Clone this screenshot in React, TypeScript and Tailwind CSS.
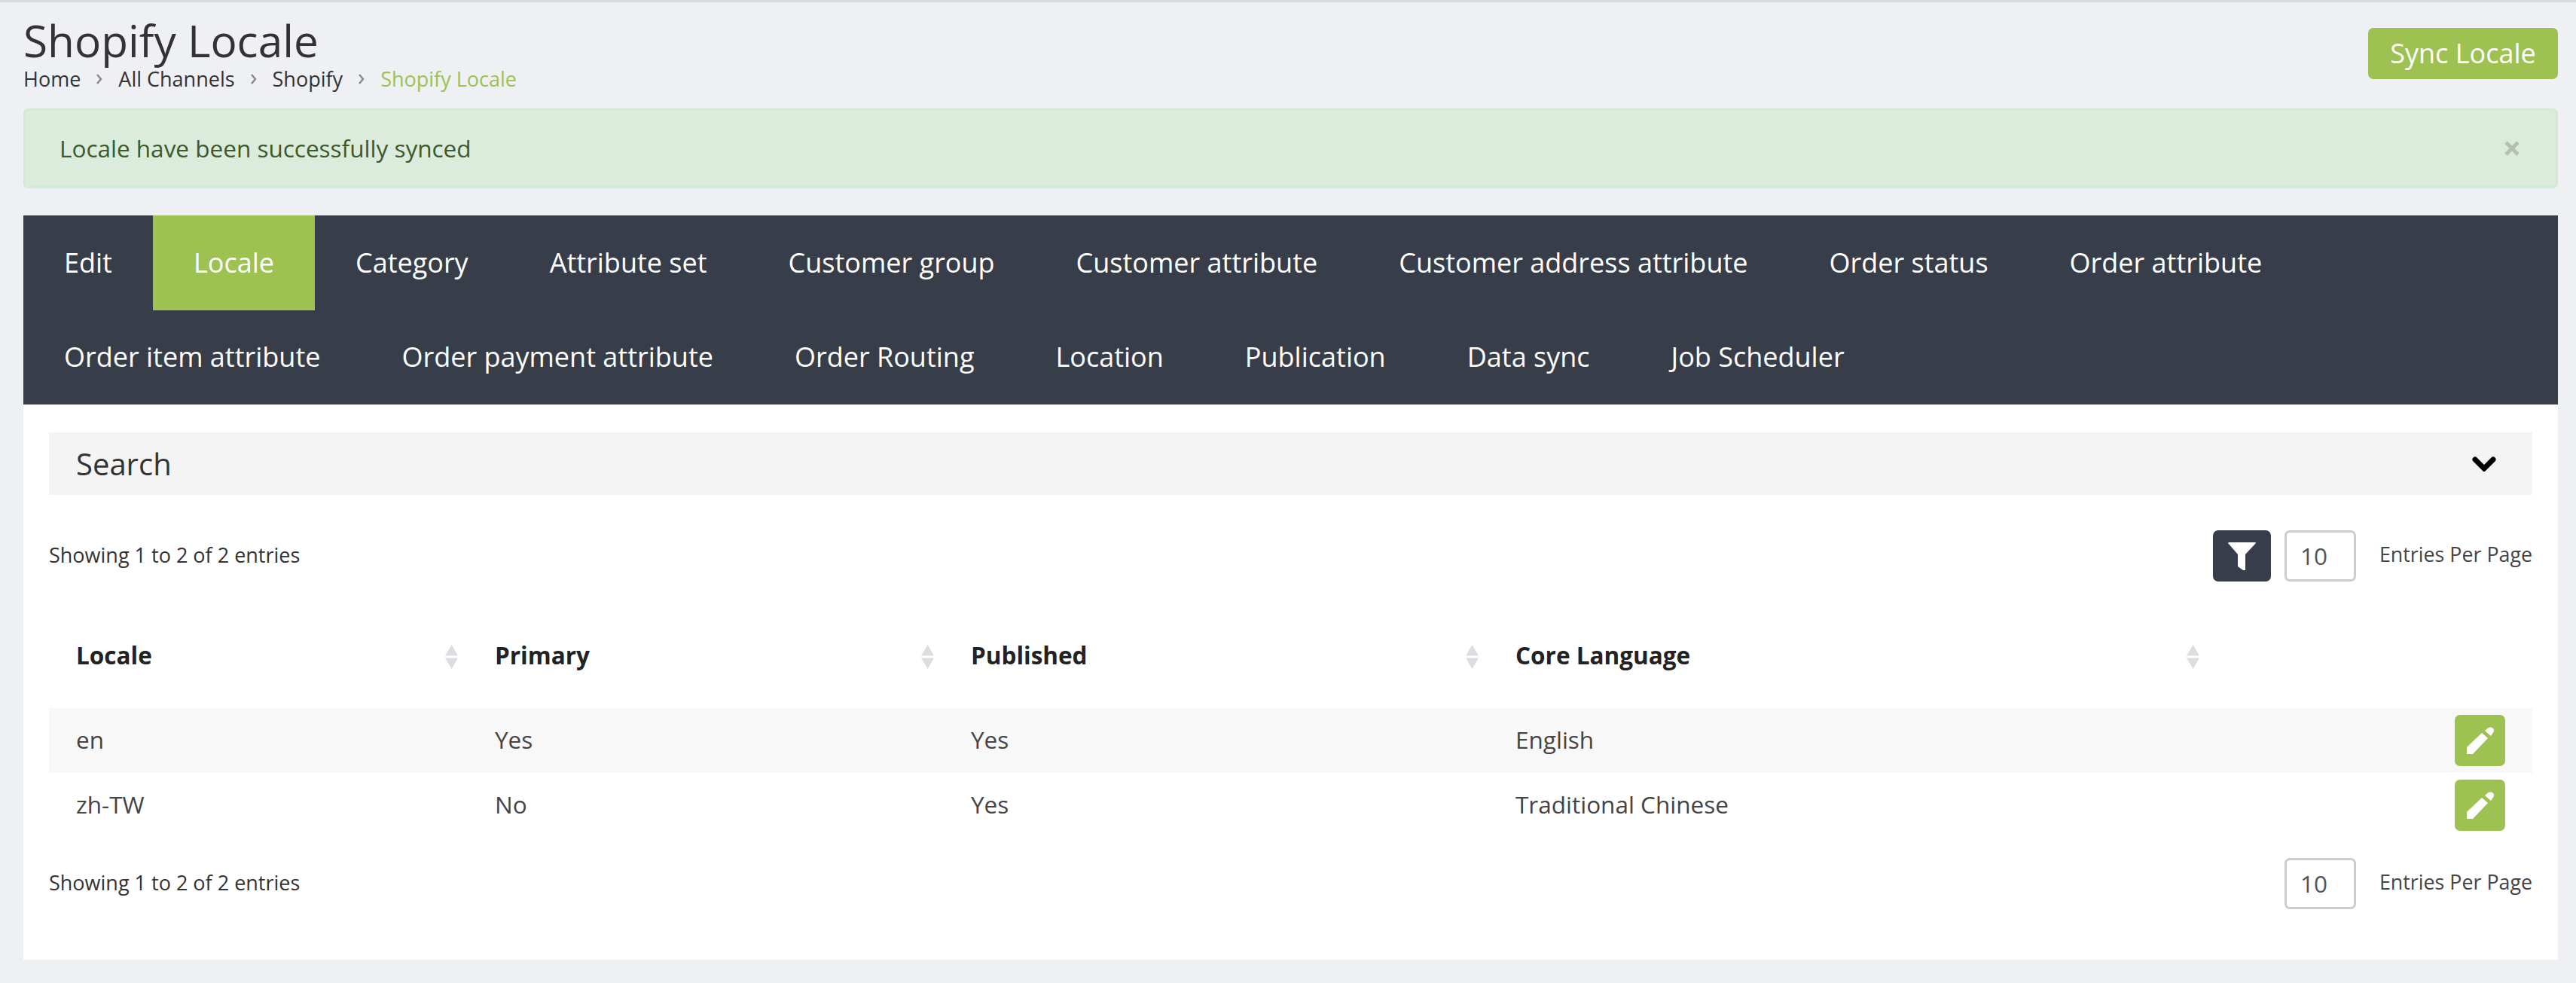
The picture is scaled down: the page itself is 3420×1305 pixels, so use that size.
const tabsRow = [
  "Edit", "Locale", "Category", "Attribute set", "Customer group", "Customer attribute", "Customer address attribute", "Order status", "Order attribute",
  "Order item attribute", "Order payment attribute", "Order Routing", "Location", "Publication", "Data sync", "Job Scheduler",
]

const rows = [
  { locale: "en", primary: "Yes", published: "Yes", core: "English" },
  { locale: "zh-TW", primary: "No", published: "Yes", core: "Traditional Chinese" },
]

const headers = [
  { label: "Locale", width: "w-[556px]" },
  { label: "Primary", width: "w-[632px]" },
  { label: "Published", width: "w-[723px]" },
  { label: "Core Language", width: "w-[957px]" },
]

function SortIcon() {
  return (
    <svg viewBox="0 0 19 34" className="absolute right-[12px] top-[55px] h-[34px] w-[19px]">
      <path d="M9.5 1 L18 15.5 H1 Z M1 18.5 H18 L9.5 33 Z" fill="#dcdde0" />
    </svg>
  )
}

function PencilIcon() {
  return (
    <svg viewBox="0 0 36 36" className="h-[36px] w-[36px]">
      <path d="M0 27 L20 8 L28 15 L8 36 H0 Z" fill="#fff" />
      <path d="M24 5 L28 1.500 Q32 -0.500 35 2 Q37.500 5 34 9 L32 12 Z" fill="#fff" />
    </svg>
  )
}

function Sep() {
  return (
    <svg viewBox="0 0 8 14" className="mx-[21px] h-[14px] w-[8px]">
      <path d="M1 1 L6 7 L1 13" fill="none" stroke="#8a8a8a" strokeWidth="2.500" />
    </svg>
  )
}

function EntriesPerPage() {
  return (
    <>
      <div className="flex h-[68px] w-[95px] items-center rounded-[7px] border-[3px] border-[#cccccc] bg-white pl-[18px] text-[31.5px] text-[#555555]">10</div>
      <span className="ml-[31px] pb-[4px] text-[26.8px] leading-none text-[#444444]">Entries Per Page</span>
    </>
  )
}

export default function App() {
  return (
    <div className="min-h-[1305px] bg-[#eef0f4] font-['Open_Sans',sans-serif] text-[#333333]">
      <div className="h-[3px] bg-[#d8dade]" />
      <div className="pl-[31px] pr-[24px]">
        <div className="flex h-[141px] items-start justify-between">
          <div>
            <h1 className="mt-[14px] text-[58.5px] leading-[72px] text-[#333333]">Shopify Locale</h1>
            <div className="-mt-[2px] flex items-center text-[27px] leading-[36px]">
              <span>Home</span>
              <Sep />
              <span>All Channels</span>
              <Sep />
              <span>Shopify</span>
              <Sep />
              <span className="text-[#9dc251]">Shopify Locale</span>
            </div>
          </div>
          <button className="mt-[34px] h-[68px] w-[252px] rounded-[7px] bg-[#9dc251] text-[36px] text-white">Sync Locale</button>
        </div>

        <div className="flex h-[106px] items-center justify-between rounded-[7px] border-[3px] border-[#d3e9d3] bg-[#dcecdc] pl-[45px] pr-[47px] text-[31.5px] text-[#3c5a2a]">
          <span>Locale have been successfully synced</span>
          <svg viewBox="0 0 22 22" className="h-[22px] w-[22px]">
            <path d="M3 3 L19 19 M19 3 L3 19" stroke="#b3c2b3" strokeWidth="5" />
          </svg>
        </div>

        <div className="mt-[36px] flex flex-wrap bg-[#383e49]">
          {tabsRow.map(t => (
            <div key={t} className={`flex h-[125.5px] items-center px-[54px] text-[36px] text-white ${t === "Locale" ? "bg-[#9dc251]" : ""}`}>
              {t}
            </div>
          ))}
        </div>

        <div className="h-[737px] bg-white px-[34px] pt-[37px]">
          <div className="flex h-[83px] items-center justify-between bg-[#f4f4f5] pl-[36px] pr-[48px]">
            <span className="text-[40px] text-[#333333]">Search</span>
            <svg viewBox="0 0 32 20" className="h-[20px] w-[32px]">
              <path d="M4 4 L16 16 L28 4" fill="none" stroke="#000" strokeWidth="7" strokeLinejoin="miter" strokeLinecap="round" />
            </svg>
          </div>

          <div className="mt-[47px] flex h-[68px] items-center">
            <span className="pb-[4px] text-[27px] leading-none">Showing 1 to 2 of 2 entries</span>
            <button className="ml-auto mr-[18px] flex h-[68px] w-[77px] items-center justify-center rounded-[7px] bg-[#383e49]">
              <svg viewBox="0 0 37 37" className="h-[37px] w-[37px]">
                <path d="M0 1 Q0 0 1 0 H36 Q37 0 37 1 L23 16 V37 H20 L13 32 V16 Z" fill="#fff" />
              </svg>
            </button>
            <EntriesPerPage />
          </div>

          <table className="mt-[28px] w-full table-fixed border-collapse">
            <thead>
              <tr>
                {headers.map(h => (
                  <th key={h.label} className={`${h.width} relative h-[140px] pl-[36px] text-left text-[31.5px] font-bold text-[#222222]`}>
                    {h.label}
                    <SortIcon />
                  </th>
                ))}
                <th />
              </tr>
            </thead>
            <tbody>
              {rows.map((r, i) => (
                <tr key={r.locale} className={i === 0 ? "bg-[#f8f8f9]" : ""}>
                  <td className="h-[86px] pb-[2px] pl-[36px] text-[31.5px] text-[#444444]">{r.locale}</td>
                  <td className="h-[86px] pb-[2px] pl-[36px] text-[31.5px] text-[#444444]">{r.primary}</td>
                  <td className="h-[86px] pb-[2px] pl-[36px] text-[31.5px] text-[#444444]">{r.published}</td>
                  <td className="h-[86px] pb-[2px] pl-[36px] text-[31.5px] text-[#444444]">{r.core}</td>
                  <td className="h-[86px] pr-[36px]">
                    <button className="ml-auto flex h-[68px] w-[67px] items-center justify-center rounded-[7px] bg-[#9dc251]">
                      <PencilIcon />
                    </button>
                  </td>
                </tr>
              ))}
            </tbody>
          </table>

          <div className="mt-[27px] flex h-[68px] items-center">
            <span className="mr-auto pb-[4px] text-[27px] leading-none">Showing 1 to 2 of 2 entries</span>
            <EntriesPerPage />
          </div>
        </div>
      </div>
    </div>
  )
}
